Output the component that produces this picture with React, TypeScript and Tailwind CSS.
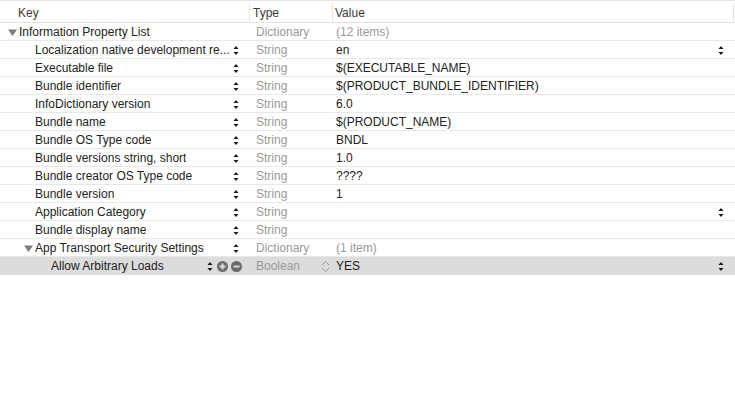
import React from "react";

type Row = {
  key: string;
  type: string;
  value: string;
  depth: number;
  open?: boolean;
  keyStepper?: boolean;
  valueStepper?: boolean;
  selected?: boolean;
  muted?: boolean;
};

const ROWS: Row[] = [
  { key: "Information Property List", type: "Dictionary", value: "(12 items)", depth: 0, open: true, muted: true },
  { key: "Localization native development re...", type: "String", value: "en", depth: 1, keyStepper: true, valueStepper: true },
  { key: "Executable file", type: "String", value: "$(EXECUTABLE_NAME)", depth: 1, keyStepper: true },
  { key: "Bundle identifier", type: "String", value: "$(PRODUCT_BUNDLE_IDENTIFIER)", depth: 1, keyStepper: true },
  { key: "InfoDictionary version", type: "String", value: "6.0", depth: 1, keyStepper: true },
  { key: "Bundle name", type: "String", value: "$(PRODUCT_NAME)", depth: 1, keyStepper: true },
  { key: "Bundle OS Type code", type: "String", value: "BNDL", depth: 1, keyStepper: true },
  { key: "Bundle versions string, short", type: "String", value: "1.0", depth: 1, keyStepper: true },
  { key: "Bundle creator OS Type code", type: "String", value: "????", depth: 1, keyStepper: true },
  { key: "Bundle version", type: "String", value: "1", depth: 1, keyStepper: true },
  { key: "Application Category", type: "String", value: "", depth: 1, keyStepper: true, valueStepper: true },
  { key: "Bundle display name", type: "String", value: "", depth: 1, keyStepper: true },
  { key: "App Transport Security Settings", type: "Dictionary", value: "(1 item)", depth: 1, open: true, keyStepper: true, muted: true },
  { key: "Allow Arbitrary Loads", type: "Boolean", value: "YES", depth: 2, keyStepper: true, valueStepper: true, selected: true },
];

function Stepper() {
  return (
    <svg width="6" height="11" viewBox="0 0 6 11" className="shrink-0">
      <path d="M3 1 L5.5 4 L0.5 4 Z" fill="#1a1a1a" />
      <path d="M3 10 L5.5 7 L0.5 7 Z" fill="#1a1a1a" />
    </svg>
  );
}

function Chevrons() {
  return (
    <svg width="9" height="13" viewBox="0 0 9 13" className="shrink-0">
      <path d="M1 5 L4.5 1.5 L8 5" fill="none" stroke="#9a9a9a" strokeWidth="1" />
      <path d="M1 8 L4.5 11.5 L8 8" fill="none" stroke="#9a9a9a" strokeWidth="1" />
    </svg>
  );
}

function Disclosure() {
  return (
    <svg width="9" height="7" viewBox="0 0 9 7" className="shrink-0">
      <path d="M0 0.5 L9 0.5 L4.5 7 Z" fill="#7a7a7a" />
    </svg>
  );
}

function RoundButton({ minus }: { minus?: boolean }) {
  return (
    <svg width="11" height="11" viewBox="0 0 11 11" className="shrink-0">
      <circle cx="5.5" cy="5.5" r="5.5" fill="#6b6b6b" />
      <rect x="2.5" y="4.5" width="6" height="2" fill="#dcdcdc" />
      {!minus && <rect x="4.5" y="2.5" width="2" height="6" fill="#dcdcdc" />}
    </svg>
  );
}

export default function App() {
  return (
    <div
      className="h-[417px] w-[735px] overflow-hidden bg-white text-[12px] text-[#222]"
      style={{ fontFamily: '"Liberation Sans", Arial, sans-serif' }}
    >
      <div className="grid h-[23px] grid-cols-[249px_83px_1fr] border-y border-[#e3e3e3] text-[#3a3a3a]">
        <div className="flex items-center pl-[18px]">Key</div>
        <div className="my-[3px] flex items-center border-l border-[#e3e3e3] pl-[3px]">Type</div>
        <div className="my-[3px] mr-[1px] flex items-center border-x border-[#e3e3e3] pl-[2px]">Value</div>
      </div>
      {ROWS.map((row) => (
        <div
          key={row.key}
          className={`grid h-[18px] grid-cols-[249px_83px_1fr] ${
            row.selected ? "bg-[#dcdcdc]" : "border-b border-[#e8e8e8]"
          }`}
        >
          <div className="flex items-center pr-[10px]">
            <div
              className="flex min-w-0 flex-1 items-center"
              style={{ paddingLeft: row.depth === 0 ? 8 : row.depth === 1 ? 35 : 51 }}
            >
              {row.open && (
                <span className={row.depth === 0 ? "mr-[2px]" : "-ml-[11px] mr-[2px]"}>
                  <Disclosure />
                </span>
              )}
              <span className="truncate whitespace-nowrap">{row.key}</span>
            </div>
            {row.selected ? (
              <div className="-mr-[3px] flex items-center gap-[3px]">
                <span className="mr-[1px]">
                  <Stepper />
                </span>
                <RoundButton />
                <RoundButton minus />
              </div>
            ) : (
              row.keyStepper && <Stepper />
            )}
          </div>
          <div className="flex items-center pl-[7px] text-[#9a9a9a]">
            <span className="flex-1">{row.type}</span>
            {row.type === "Boolean" && (
              <span className="mr-[2px]">
                <Chevrons />
              </span>
            )}
          </div>
          <div className="flex items-center pl-[4px] pr-[11px]">
            <span className={`flex-1 ${row.muted ? "text-[#9a9a9a]" : ""}`}>{row.value}</span>
            {row.valueStepper && <Stepper />}
          </div>
        </div>
      ))}
    </div>
  );
}
